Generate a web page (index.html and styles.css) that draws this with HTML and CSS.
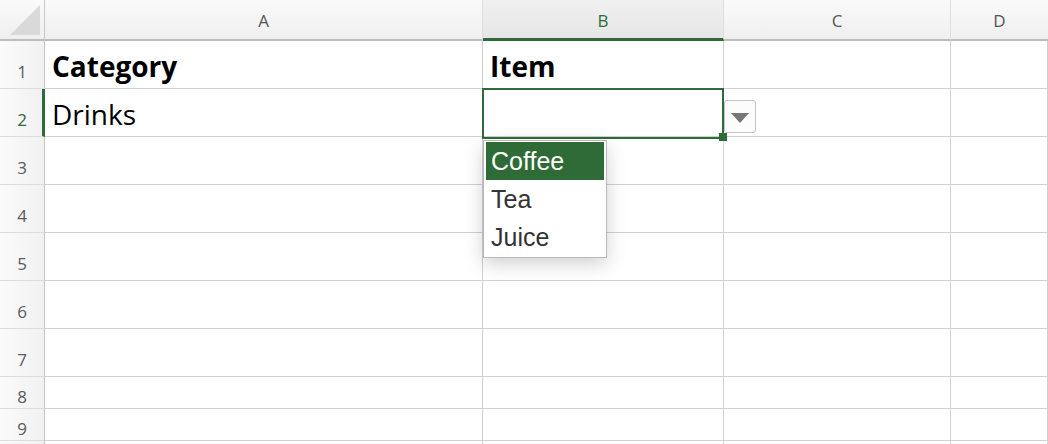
FILE: index.html
```html
<!DOCTYPE html>
<html>
<head>
<meta charset="utf-8">
<link rel="stylesheet" href="styles.css">
</head>
<body>
<div class="sheet">
  <div class="corner"><span class="tri"></span></div>
  <div class="colhead">A</div>
  <div class="colhead active">B</div>
  <div class="colhead">C</div>
  <div class="colhead last">D</div>

  <div class="rowhead tall">1</div>
  <div class="cell bold">Category</div>
  <div class="cell bold">Item</div>
  <div class="cell"></div>
  <div class="cell"></div>

  <div class="rowhead tall active">2</div>
  <div class="cell">Drinks</div>
  <div class="cell selected">
    <div class="selbox"></div>
    <div class="handle"></div>
    <div class="ddbtn"><svg width="18" height="10" viewBox="0 0 18 10"><polygon points="0,0 18,0 9,10" fill="#777"/></svg></div>
    <ul class="list">
      <li class="hl">Coffee</li>
      <li>Tea</li>
      <li>Juice</li>
    </ul>
  </div>
  <div class="cell"></div>
  <div class="cell"></div>

  <div class="rowhead tall">3</div><div class="cell"></div><div class="cell"></div><div class="cell"></div><div class="cell"></div>
  <div class="rowhead tall">4</div><div class="cell"></div><div class="cell"></div><div class="cell"></div><div class="cell"></div>
  <div class="rowhead tall">5</div><div class="cell"></div><div class="cell"></div><div class="cell"></div><div class="cell"></div>
  <div class="rowhead tall">6</div><div class="cell"></div><div class="cell"></div><div class="cell"></div><div class="cell"></div>
  <div class="rowhead tall">7</div><div class="cell"></div><div class="cell"></div><div class="cell"></div><div class="cell"></div>
  <div class="rowhead short">8</div><div class="cell"></div><div class="cell"></div><div class="cell"></div><div class="cell"></div>
  <div class="rowhead short">9</div><div class="cell"></div><div class="cell"></div><div class="cell"></div><div class="cell"></div>
  <div class="rowhead stub"></div><div class="cell stub"></div><div class="cell stub"></div><div class="cell stub"></div><div class="cell stub"></div>
</div>
</body>
</html>
```

FILE: styles.css
```css
* { box-sizing: border-box; }
html, body {
  margin: 0;
  padding: 0;
  width: 1048px;
  height: 444px;
  overflow: hidden;
  background: #fff;
}
.sheet {
  display: grid;
  grid-template-columns: 45px 438px 241px 227px 1fr;
  grid-template-rows: 41px repeat(7, 48px) 32px 32px 3px;
  width: 1048px;
}
.corner {
  background: linear-gradient(#fafafa, #efefef);
  border-right: 1px solid #c8c8c8;
  border-bottom: 2px solid #bdbdbd;
  position: relative;
}
.tri {
  position: absolute;
  right: 4px;
  bottom: 4px;
  width: 0;
  height: 0;
  border-left: 30px solid transparent;
  border-bottom: 30px solid #d9d9d9;
}
.colhead {
  background: linear-gradient(#fafafa, #efefef);
  border-right: 1px solid #dedede;
  border-bottom: 2px solid #bdbdbd;
  display: flex;
  align-items: center;
  justify-content: center;
  font-family: "Open Sans", "DejaVu Sans", sans-serif;
  font-size: 17px;
  color: #555;
  padding-top: 1px;
}
.colhead.active {
  background: linear-gradient(#f0f0f0, #e6e6e6);
  border-bottom: 3px solid #2e6b37;
  color: #2e6b37;
  padding-top: 2px;
}
.colhead.last { border-right: none; }
.rowhead {
  background: linear-gradient(to right, #fbfbfb, #f1f1f1);
  border-right: 1px solid #c4c4c4;
  border-bottom: 1px solid #dcdcdc;
  display: flex;
  align-items: flex-end;
  justify-content: center;
  font-family: "Open Sans", "DejaVu Sans", sans-serif;
  font-size: 17px;
  line-height: 17px;
  color: #5a5a5a;
}
.rowhead.tall { padding-bottom: 8px; }
.rowhead.short { padding-bottom: 3px; }
.rowhead.active {
  border-right: 3px solid #2e6b37;
  color: #2e6b37;
  padding-left: 2px;
}
.rowhead.stub, .cell.stub { border-bottom: none; padding: 0; }
.cell {
  border-right: 1px solid #d1d1d1;
  border-bottom: 1px solid #d1d1d1;
  display: flex;
  align-items: flex-end;
  padding: 0 0 8px 7px;
  font-family: "Open Sans", "Liberation Sans", sans-serif;
  font-size: 28px;
  line-height: 28px;
  color: #000;
}
.cell.bold { font-weight: 700; }
.cell.selected { position: relative; }
.selbox {
  position: absolute;
  left: -1px;
  top: -1px;
  width: 242px;
  height: 51px;
  border: 2px solid #2e6b37;
}
.handle {
  position: absolute;
  left: 236px;
  top: 44px;
  width: 8px;
  height: 8px;
  background: #2e6b37;
  z-index: 2;
}
.ddbtn {
  position: absolute;
  left: 241px;
  top: 11px;
  width: 32px;
  height: 33px;
  border: 1px solid #c4c4c4;
  border-radius: 3px;
  background: #fcfcfc;
  display: flex;
  align-items: center;
  justify-content: center;
  padding-top: 3px;
  z-index: 3;
}
.list {
  position: absolute;
  left: 0;
  top: 51px;
  width: 124px;
  margin: 0;
  padding: 1px 2px;
  list-style: none;
  background: #fff;
  border: 1px solid #b8b8b8;
  box-shadow: 0 6px 18px rgba(0,0,0,0.18);
  z-index: 4;
}
.list li {
  height: 38px;
  line-height: 38px;
  padding-left: 5px;
  font-family: "Liberation Sans", Arial, sans-serif;
  font-size: 25px;
  color: #333;
}
.list li.hl {
  background: #2e6b37;
  color: #fff;
}
```
